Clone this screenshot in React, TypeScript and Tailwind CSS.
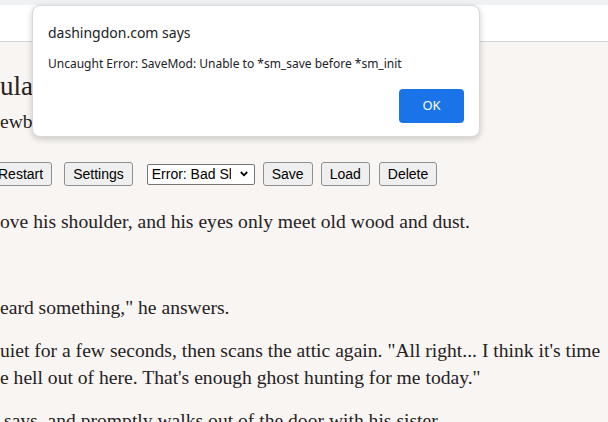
import React from "react";

const serif = { fontFamily: '"Liberation Serif", "Times New Roman", serif' };

function Btn({ children }: { children: React.ReactNode }) {
  return (
    <button
      className="h-[24px] px-[8px] border border-[#8f8f8f] rounded-[3px] bg-[#efefef] text-[14px] leading-[16px] text-black"
      style={{ fontFamily: '"Liberation Sans", Arial, sans-serif' }}
    >
      {children}
    </button>
  );
}

export default function App() {
  return (
    <div className="relative w-[608px] h-[422px] overflow-hidden bg-[#f8f5f2]">
      <div className="h-[5px] bg-[#f0f1f2]" />
      <div className="h-[37px] bg-white border-b border-[#d4d4d4]" />
      <div className="text-[#26221f]" style={serif}>
        <div className="pt-[28px] text-[27px] leading-[32px] whitespace-nowrap">ulacrum</div>
        <div className="mt-[6px] text-[19.5px] leading-[27px] whitespace-nowrap">ewbury</div>
        <div
          className="mt-[27px] ml-[-11px] flex items-center whitespace-nowrap"
          style={{ fontFamily: '"Liberation Sans", Arial, sans-serif' }}
        >
          <Btn>Restart</Btn>
          <div className="ml-[12px]">
            <Btn>Settings</Btn>
          </div>
          <div className="ml-[14px] w-[108px] h-[21px] bg-white border border-[#767676] rounded-[2px] flex items-center pl-[4px] pr-[6px] text-[14px] text-black">
            <span className="w-[79px] overflow-hidden whitespace-nowrap">Error: Bad Slot</span>
            <span className="flex-1" />
            <svg width="8" height="6" viewBox="0 0 8 6" className="shrink-0">
              <path d="M0.8 1 L4 4.3 L7.2 1" stroke="#000" strokeWidth="1.8" fill="none" />
            </svg>
          </div>
          <div className="ml-[8px]">
            <Btn>Save</Btn>
          </div>
          <div className="ml-[8px]">
            <Btn>Load</Btn>
          </div>
          <div className="ml-[9px]">
            <Btn>Delete</Btn>
          </div>
        </div>
        <div className="mt-[22px] text-[19.6px] leading-[27px] whitespace-nowrap flex flex-col gap-[16px]">
          <p>ove his shoulder, and his eyes only meet old wood and dust.</p>
          <p>&nbsp;</p>
          <p>eard something," he answers.</p>
          <p>
            uiet for a few seconds, then scans the attic again. "All right... I think it's time
            <br />e hell out of here. That's enough ghost hunting for me today."
          </p>
          <p className="pl-[4px]">says, and promptly walks out of the door with his sister.</p>
        </div>
      </div>

      <div
        className="absolute left-[32px] top-[5px] w-[448px] h-[132px] bg-white rounded-[8px] border border-[#d9d9d9] shadow-[0_2px_6px_rgba(0,0,0,0.2)] flex flex-col px-[15px] pt-[17px]"
        style={{ fontFamily: '"Noto Sans", "Segoe UI", sans-serif' }}
      >
        <div className="text-[14px] leading-[20px] text-[#202124]">dashingdon.com says</div>
        <div className="mt-[13px] text-[12px] leading-[16px] text-[#202124]">
          Uncaught Error: SaveMod: Unable to *sm_save before *sm_init
        </div>
        <div className="mt-[17px] flex justify-end">
          <button className="w-[65px] h-[34px] rounded-[4px] bg-[#1a73e8] text-white text-[13px]">OK</button>
        </div>
      </div>
    </div>
  );
}
